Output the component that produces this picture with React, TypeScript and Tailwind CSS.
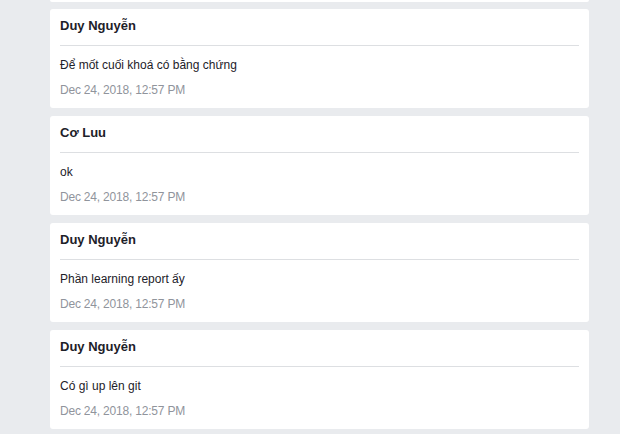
import React from "react";

const messages = [
  { name: "Duy Nguyễn", text: "Để mốt cuối khoá có bằng chứng", date: "Dec 24, 2018, 12:57 PM" },
  { name: "Cơ Luu", text: "ok", date: "Dec 24, 2018, 12:57 PM" },
  { name: "Duy Nguyễn", text: "Phần learning report ấy", date: "Dec 24, 2018, 12:57 PM" },
  { name: "Duy Nguyễn", text: "Có gì up lên git", date: "Dec 24, 2018, 12:57 PM" },
];

function Card({ name, text, date }: { name: string; text: string; date: string }) {
  return (
    <div className="bg-white rounded-[3px] px-[10px] h-[99px] flex flex-col shrink-0">
      <div className="h-[37px] pt-[9px] border-b border-[#dddfe2] text-[13px] font-bold text-[#1d2129] leading-[16px]">
        {name}
      </div>
      <div className="mt-[11px] text-[12px] leading-[16px] text-[#1d2129]">{text}</div>
      <div className="mt-[9px] text-[12px] leading-[16px] text-[#90949c] tracking-[-0.2px]">{date}</div>
    </div>
  );
}

export default function App() {
  return (
    <div
      className="w-[620px] h-[434px] overflow-hidden bg-[#e9ebee]"
      style={{ fontFamily: '"Liberation Sans", Arial, sans-serif' }}
    >
      <div className="ml-[50px] w-[539px] flex flex-col">
        <div className="h-[2px] bg-white rounded-b-[3px] shrink-0" />
        <div className="pt-[7px] flex flex-col gap-[8px]">
          {messages.map((m, i) => (
            <Card key={i} {...m} />
          ))}
        </div>
      </div>
    </div>
  );
}
